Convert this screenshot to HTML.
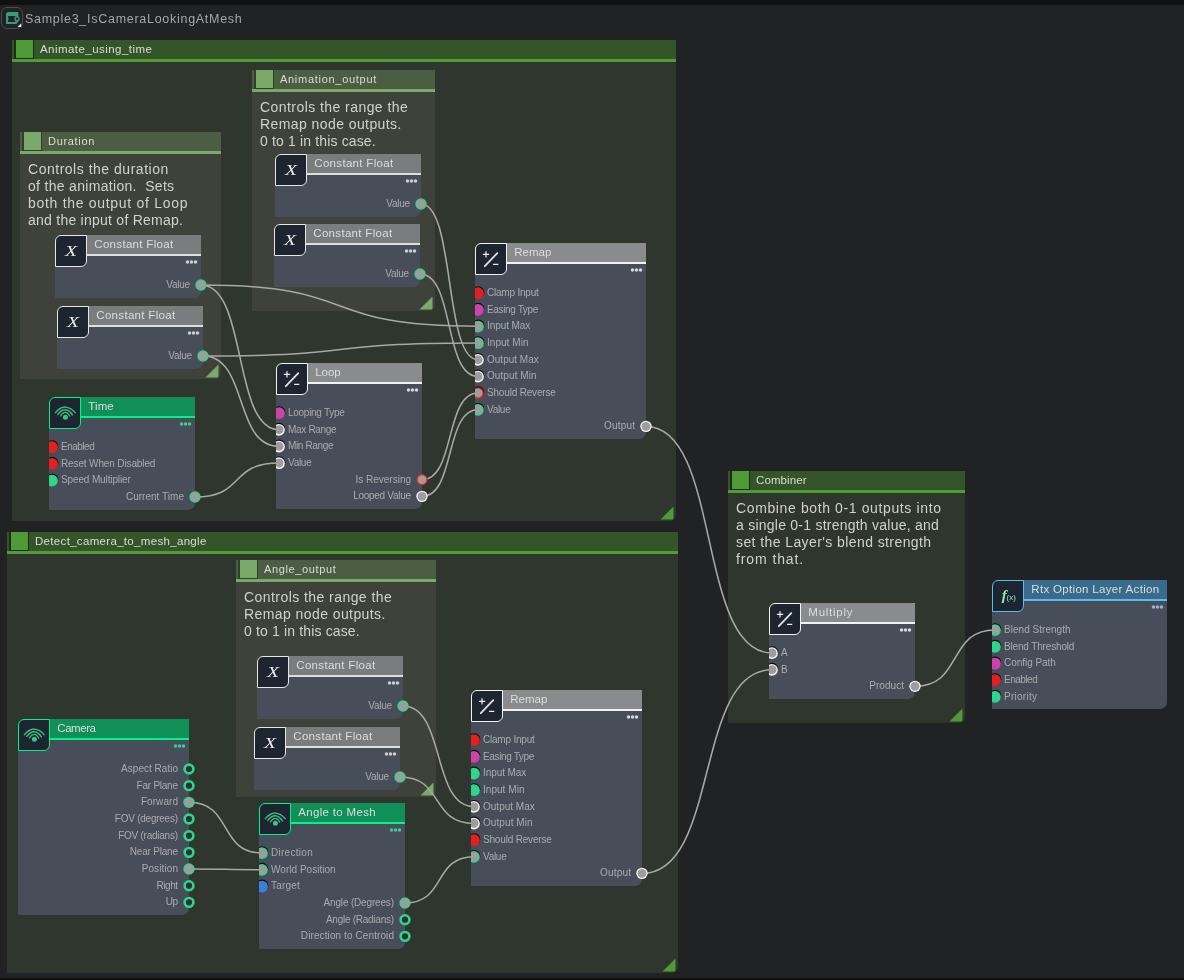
<!DOCTYPE html>
<html><head><meta charset="utf-8"><style>
*{margin:0;padding:0;box-sizing:border-box}
html,body{width:1184px;height:980px;overflow:hidden;background:#212224;font-family:"Liberation Sans", sans-serif;-webkit-font-smoothing:antialiased}
.root{position:absolute;left:0;top:0;width:1184px;height:980px;will-change:transform}
.band{position:absolute;left:0;width:1184px;background:#111112}
.fr{position:absolute;border-bottom-right-radius:6px}
.frh{position:absolute;left:0;top:0;right:0;height:22px}
.frs{position:absolute;left:2px;top:0;width:20px;height:19px}
.frt{position:absolute;left:28px;top:1.5px;font-size:11.5px;letter-spacing:0.35px;color:#dcdcd4;white-space:nowrap;line-height:14px}
.cm .frt{font-size:11px;top:2.3px}
.cmt{position:absolute;left:8px;top:29px;font-size:14px;line-height:16.85px;letter-spacing:0.48px;color:#d2d2ca;white-space:nowrap}
.tri{position:absolute;right:2px;bottom:1px}
.wires{position:absolute;left:0;top:0;overflow:visible}
.nd{position:absolute;border-bottom-right-radius:7px;overflow:hidden}
.nb{position:absolute;left:0;right:0;top:20px;bottom:0;background:#484d5a}
.nh{position:absolute;left:20px;top:0;right:0;height:21px}
.nt{position:absolute;left:39.3px;top:3px;font-size:11.5px;letter-spacing:0.3px;color:#dddddd;white-space:nowrap;line-height:12px}
.dots{position:absolute;right:2px;top:24px}
.ins{position:absolute;left:0;top:0}
.lb{position:absolute;font-size:10px;line-height:12px;letter-spacing:-0.15px;color:#aaabae;white-space:nowrap}
.li{left:12px}
.ic{position:absolute;left:0;top:0;width:32px;height:32px;background:#1d2530;border:1.2px solid;border-top-left-radius:6px;border-bottom-right-radius:6px}
.ix{position:absolute;left:0;top:1px;width:30px;height:30px;text-align:center;font-family:"Liberation Serif",serif;font-style:italic;font-size:14px;line-height:30px;color:#ececec;transform:scaleX(1.4)}
.ifx{position:absolute;left:7px;top:7px;color:#8fe8b4;font-family:"Liberation Serif",serif;white-space:nowrap}
.ifx i{font-size:17px;font-weight:bold}
.ifx span{font-size:9px}
.ttl{position:absolute;left:25px;top:12px;font-size:12.5px;letter-spacing:0.72px;color:#a6a6a6;white-space:nowrap;line-height:14px}
.ticon{position:absolute;left:1px;top:7px;width:22px;height:22px;border:1.3px solid #4c4c4e;border-radius:6px}
</style></head>
<body><div class="root">
<div class="band" style="top:0;height:5px"></div>
<div class="band" style="top:978px;height:2px"></div>
<div class="ticon"><svg width="22" height="22" viewBox="0 0 22 22" style="position:absolute;left:-1px;top:-1px"><path d="M5 7.5Q5 4.9 7.6 4.9L17.3 4.9L17.3 14.5L15.3 17L5 17Z" fill="#3a9c70"/><path d="M7 9L14.5 9Q13.5 12 14.5 15L7 15Q8 12 7 9Z" fill="#1c2631"/><circle cx="16" cy="11.8" r="2" fill="#1c2631" stroke="#3a9c70" stroke-width="1.3"/><path d="M20.3 16.2L20.3 20L16.5 20Z" fill="#e8e8e8"/></svg></div>
<div class="ttl">Sample3_IsCameraLookingAtMesh</div>

<div class="fr grp" style="left:12px;top:40px;width:664px;height:481px;background:#2e362d"><div class="frh" style="background:#335529;border-bottom:3px solid #4e9e34"></div><div class="frs" style="background:#4e9a36;border:1px solid #1f2a1b;border-left-width:2px;border-top:0"></div><div class="frt" style="letter-spacing:0.45px">Animate_using_time</div><svg class="tri" width="14" height="14" viewBox="0 0 14 14"><path d="M13.5 0.5 L13.5 12 Q13.5 13.5 12 13.5 L0.5 13.5 Z" fill="#4e9a36"/></svg></div><div class="fr grp" style="left:7px;top:532px;width:671px;height:441px;background:#2e362d"><div class="frh" style="background:#335529;border-bottom:3px solid #4e9e34"></div><div class="frs" style="background:#4e9a36;border:1px solid #1f2a1b;border-left-width:2px;border-top:0"></div><div class="frt" style="letter-spacing:0.32px">Detect_camera_to_mesh_angle</div><svg class="tri" width="14" height="14" viewBox="0 0 14 14"><path d="M13.5 0.5 L13.5 12 Q13.5 13.5 12 13.5 L0.5 13.5 Z" fill="#4e9a36"/></svg></div><div class="fr grp" style="left:728px;top:471px;width:237px;height:252px;background:#2e362d"><div class="frh" style="background:#335529;border-bottom:3px solid #4e9e34"></div><div class="frs" style="background:#4e9a36;border:1px solid #1f2a1b;border-left-width:2px;border-top:0"></div><div class="frt" style="letter-spacing:0.1px">Combiner</div><div class="cmt"><div style="letter-spacing:0.62px">Combine both 0-1 outputs into</div><div style="letter-spacing:0.24px">a single 0-1 strength value, and</div><div style="letter-spacing:0.41px">set the Layer's blend strength</div><div style="letter-spacing:0.9px">from that.</div></div><svg class="tri" width="14" height="14" viewBox="0 0 14 14"><path d="M13.5 0.5 L13.5 12 Q13.5 13.5 12 13.5 L0.5 13.5 Z" fill="#4e9a36"/></svg></div><div class="fr cm" style="left:20px;top:132px;width:201px;height:247px;background:#3e423a"><div class="frh" style="background:#4b5e43;border-bottom:3px solid #7aaa6a"></div><div class="frs" style="background:#7aaa6a;border:1px solid #333d2f;border-left-width:2px;border-top:0"></div><div class="frt" style="letter-spacing:0.69px">Duration</div><div class="cmt"><div style="letter-spacing:0.515px">Controls the duration</div><div style="letter-spacing:0.31px">of the animation.&nbsp; Sets</div><div style="letter-spacing:0.7px">both the output of Loop</div><div style="letter-spacing:0.25px">and the input of Remap.</div></div><svg class="tri" width="14" height="14" viewBox="0 0 14 14"><path d="M13.5 0.5 L13.5 12 Q13.5 13.5 12 13.5 L0.5 13.5 Z" fill="#7aaa6a"/></svg></div><div class="fr cm" style="left:252px;top:70px;width:183px;height:241px;background:#3e423a"><div class="frh" style="background:#4b5e43;border-bottom:3px solid #7aaa6a"></div><div class="frs" style="background:#7aaa6a;border:1px solid #333d2f;border-left-width:2px;border-top:0"></div><div class="frt" style="letter-spacing:0.71px">Animation_output</div><div class="cmt"><div style="letter-spacing:0.44px">Controls the range the</div><div style="letter-spacing:0.42px">Remap node outputs.</div><div style="letter-spacing:0.15px">0 to 1 in this case.</div></div><svg class="tri" width="14" height="14" viewBox="0 0 14 14"><path d="M13.5 0.5 L13.5 12 Q13.5 13.5 12 13.5 L0.5 13.5 Z" fill="#7aaa6a"/></svg></div><div class="fr cm" style="left:236px;top:560px;width:200px;height:237px;background:#3e423a"><div class="frh" style="background:#4b5e43;border-bottom:3px solid #7aaa6a"></div><div class="frs" style="background:#7aaa6a;border:1px solid #333d2f;border-left-width:2px;border-top:0"></div><div class="frt" style="letter-spacing:0.63px">Angle_output</div><div class="cmt"><div style="letter-spacing:0.44px">Controls the range the</div><div style="letter-spacing:0.42px">Remap node outputs.</div><div style="letter-spacing:0.15px">0 to 1 in this case.</div></div><svg class="tri" width="14" height="14" viewBox="0 0 14 14"><path d="M13.5 0.5 L13.5 12 Q13.5 13.5 12 13.5 L0.5 13.5 Z" fill="#7aaa6a"/></svg></div><svg class="wires" width="1184" height="980"><path d="M201.0 285.0C367.2 285.0 311.8 326.3 478.0 326.3 M201.0 285.0C247.8 285.0 232.2 429.7 279.0 429.7 M203.0 356.0C368.0 356.0 313.0 343.0 478.0 343.0 M203.0 356.0C248.6 356.0 233.4 446.3 279.0 446.3 M421.0 204.0C455.2 204.0 443.8 359.7 478.0 359.7 M420.0 274.0C454.8 274.0 443.2 376.4 478.0 376.4 M195.0 497.0C245.4 497.0 228.6 463.0 279.0 463.0 M422.0 479.7C455.6 479.7 444.4 393.0 478.0 393.0 M422.0 496.4C455.6 496.4 444.4 409.7 478.0 409.7 M646.0 426.4C721.6 426.4 696.4 653.0 772.0 653.0 M642.0 873.4C720.0 873.4 694.0 669.7 772.0 669.7 M915.0 686.3C963.0 686.3 947.0 630.0 995.0 630.0 M189.0 802.3C232.8 802.3 218.2 853.0 262.0 853.0 M189.0 869.0C232.8 869.0 218.2 869.7 262.0 869.7 M403.0 706.0C445.6 706.0 431.4 806.7 474.0 806.7 M400.0 777.0C444.4 777.0 429.6 823.4 474.0 823.4 M405.0 903.0C446.4 903.0 432.6 856.7 474.0 856.7" stroke="#a8a8a8" stroke-width="1.55" fill="none"/></svg><div class="nd" style="left:55px;top:235px;width:146px;height:62.5px"><div class="nb"></div><div class="nh" style="background:#7b7c7e;border-bottom:2px solid #dcdfde"></div><div class="nt" style="letter-spacing:0.31px">Constant Float</div><svg class="dots" width="14" height="6" viewBox="0 0 14 6"><circle cx="2.5" cy="3" r="1.75" fill="#d0d0d0"/><circle cx="6.5" cy="3" r="1.75" fill="#d0d0d0"/><circle cx="10.5" cy="3" r="1.75" fill="#d0d0d0"/></svg><div class="lb lo" style="top:44.0px;right:11.28px;letter-spacing:-0.28px">Value</div><div class="ic" style="border-color:#e6e6e6"><div class="ix">X</div></div></div><div class="nd" style="left:57px;top:306px;width:146px;height:62.5px"><div class="nb"></div><div class="nh" style="background:#7b7c7e;border-bottom:2px solid #dcdfde"></div><div class="nt" style="letter-spacing:0.31px">Constant Float</div><svg class="dots" width="14" height="6" viewBox="0 0 14 6"><circle cx="2.5" cy="3" r="1.75" fill="#d0d0d0"/><circle cx="6.5" cy="3" r="1.75" fill="#d0d0d0"/><circle cx="10.5" cy="3" r="1.75" fill="#d0d0d0"/></svg><div class="lb lo" style="top:44.0px;right:11.28px;letter-spacing:-0.28px">Value</div><div class="ic" style="border-color:#e6e6e6"><div class="ix">X</div></div></div><div class="nd" style="left:275px;top:154px;width:146px;height:62.5px"><div class="nb"></div><div class="nh" style="background:#7b7c7e;border-bottom:2px solid #dcdfde"></div><div class="nt" style="letter-spacing:0.31px">Constant Float</div><svg class="dots" width="14" height="6" viewBox="0 0 14 6"><circle cx="2.5" cy="3" r="1.75" fill="#d0d0d0"/><circle cx="6.5" cy="3" r="1.75" fill="#d0d0d0"/><circle cx="10.5" cy="3" r="1.75" fill="#d0d0d0"/></svg><div class="lb lo" style="top:44.0px;right:11.28px;letter-spacing:-0.28px">Value</div><div class="ic" style="border-color:#e6e6e6"><div class="ix">X</div></div></div><div class="nd" style="left:274px;top:224px;width:146px;height:62.5px"><div class="nb"></div><div class="nh" style="background:#7b7c7e;border-bottom:2px solid #dcdfde"></div><div class="nt" style="letter-spacing:0.31px">Constant Float</div><svg class="dots" width="14" height="6" viewBox="0 0 14 6"><circle cx="2.5" cy="3" r="1.75" fill="#d0d0d0"/><circle cx="6.5" cy="3" r="1.75" fill="#d0d0d0"/><circle cx="10.5" cy="3" r="1.75" fill="#d0d0d0"/></svg><div class="lb lo" style="top:44.0px;right:11.28px;letter-spacing:-0.28px">Value</div><div class="ic" style="border-color:#e6e6e6"><div class="ix">X</div></div></div><div class="nd" style="left:475px;top:243px;width:171px;height:195.9px"><div class="nb"></div><div class="nh" style="background:#8a8b8d;border-bottom:2px solid #f2f2f2"></div><div class="nt" style="letter-spacing:0.0px">Remap</div><svg class="dots" width="14" height="6" viewBox="0 0 14 6"><circle cx="2.5" cy="3" r="1.75" fill="#d8d8d8"/><circle cx="6.5" cy="3" r="1.75" fill="#d8d8d8"/><circle cx="10.5" cy="3" r="1.75" fill="#d8d8d8"/></svg><div class="lb li" style="top:44.0px;letter-spacing:-0.21px">Clamp Input</div><div class="lb li" style="top:60.7px;letter-spacing:-0.36px">Easing Type</div><div class="lb li" style="top:77.3px;letter-spacing:-0.08px">Input Max</div><div class="lb li" style="top:94.0px;letter-spacing:0.04px">Input Min</div><div class="lb li" style="top:110.7px;letter-spacing:0.01px">Output Max</div><div class="lb li" style="top:127.4px;letter-spacing:0.08px">Output Min</div><div class="lb li" style="top:144.0px;letter-spacing:-0.18px">Should Reverse</div><div class="lb li" style="top:160.7px;letter-spacing:-0.28px">Value</div><svg class="ins" width="171" height="195.9"><circle cx="3.3" cy="49.2" r="6" fill="#0c0c0c"/><circle cx="3" cy="50.2" r="5.9" fill="#e3201f"/><circle cx="3.3" cy="65.87" r="6" fill="#0c0c0c"/><circle cx="3" cy="66.87" r="5.9" fill="#cc44aa"/><circle cx="3.3" cy="82.54" r="6" fill="#0c0c0c"/><circle cx="3" cy="83.54" r="5.9" fill="#2ed68a"/><circle cx="3" cy="83.34" r="4.5" fill="#9d9d9d"/><circle cx="3.3" cy="99.21000000000001" r="6" fill="#0c0c0c"/><circle cx="3" cy="100.21000000000001" r="5.9" fill="#2ed68a"/><circle cx="3" cy="100.01" r="4.5" fill="#9d9d9d"/><circle cx="3.3" cy="115.88000000000001" r="6" fill="#0c0c0c"/><circle cx="3" cy="116.88000000000001" r="5.9" fill="#f2f2f2"/><circle cx="3" cy="116.68" r="4.5" fill="#9d9d9d"/><circle cx="3.3" cy="132.54999999999998" r="6" fill="#0c0c0c"/><circle cx="3" cy="133.54999999999998" r="5.9" fill="#f2f2f2"/><circle cx="3" cy="133.35" r="4.5" fill="#9d9d9d"/><circle cx="3.3" cy="149.22" r="6" fill="#0c0c0c"/><circle cx="3" cy="150.22" r="5.9" fill="#e3201f"/><circle cx="3" cy="150.02" r="4.5" fill="#9d9d9d"/><circle cx="3.3" cy="165.89" r="6" fill="#0c0c0c"/><circle cx="3" cy="166.89" r="5.9" fill="#2ed68a"/><circle cx="3" cy="166.69" r="4.5" fill="#9d9d9d"/></svg><div class="lb lo" style="top:177.4px;right:10.78px;letter-spacing:0.22px">Output</div><div class="ic" style="border-color:#f2f2f2"><svg width="32" height="32" viewBox="0 0 32 32" style="position:absolute;left:-1.2px;top:-1.2px"><path d="M7.9 11.4h6.3M11 8.3v6.2M18.1 21.3h5.2" stroke="#ececec" stroke-width="1.25"/><path d="M9.8 23.2L22.3 10.2" stroke="#e0e0e0" stroke-width="1.85" stroke-linecap="round"/></svg></div></div><div class="nd" style="left:276px;top:363px;width:146px;height:145.9px"><div class="nb"></div><div class="nh" style="background:#8a8b8d;border-bottom:2px solid #f2f2f2"></div><div class="nt" style="letter-spacing:-0.1px">Loop</div><svg class="dots" width="14" height="6" viewBox="0 0 14 6"><circle cx="2.5" cy="3" r="1.75" fill="#d8d8d8"/><circle cx="6.5" cy="3" r="1.75" fill="#d8d8d8"/><circle cx="10.5" cy="3" r="1.75" fill="#d8d8d8"/></svg><div class="lb li" style="top:44.0px;letter-spacing:-0.28px">Looping Type</div><div class="lb li" style="top:60.7px;letter-spacing:-0.31px">Max Range</div><div class="lb li" style="top:77.3px;letter-spacing:-0.36px">Min Range</div><div class="lb li" style="top:94.0px;letter-spacing:-0.28px">Value</div><svg class="ins" width="146" height="145.9"><circle cx="3.3" cy="49.2" r="6" fill="#0c0c0c"/><circle cx="3" cy="50.2" r="5.9" fill="#cc44aa"/><circle cx="3.3" cy="65.87" r="6" fill="#0c0c0c"/><circle cx="3" cy="66.87" r="5.9" fill="#f2f2f2"/><circle cx="3" cy="66.67" r="4.5" fill="#9d9d9d"/><circle cx="3.3" cy="82.54" r="6" fill="#0c0c0c"/><circle cx="3" cy="83.54" r="5.9" fill="#f2f2f2"/><circle cx="3" cy="83.34" r="4.5" fill="#9d9d9d"/><circle cx="3.3" cy="99.21000000000001" r="6" fill="#0c0c0c"/><circle cx="3" cy="100.21000000000001" r="5.9" fill="#f2f2f2"/><circle cx="3" cy="100.01" r="4.5" fill="#9d9d9d"/></svg><div class="lb lo" style="top:110.7px;right:11.01px;letter-spacing:-0.01px">Is Reversing</div><div class="lb lo" style="top:127.4px;right:11.30px;letter-spacing:-0.3px">Looped Value</div><div class="ic" style="border-color:#f2f2f2"><svg width="32" height="32" viewBox="0 0 32 32" style="position:absolute;left:-1.2px;top:-1.2px"><path d="M7.9 11.4h6.3M11 8.3v6.2M18.1 21.3h5.2" stroke="#ececec" stroke-width="1.25"/><path d="M9.8 23.2L22.3 10.2" stroke="#e0e0e0" stroke-width="1.85" stroke-linecap="round"/></svg></div></div><div class="nd" style="left:49px;top:397px;width:146px;height:112.5px"><div class="nb"></div><div class="nh" style="background:#108f58;border-bottom:2px solid #00f28a"></div><div class="nt" style="letter-spacing:0.1px">Time</div><svg class="dots" width="14" height="6" viewBox="0 0 14 6"><circle cx="2.5" cy="3" r="1.75" fill="#3fd08a"/><circle cx="6.5" cy="3" r="1.75" fill="#3fd08a"/><circle cx="10.5" cy="3" r="1.75" fill="#3fd08a"/></svg><div class="lb li" style="top:44.0px;letter-spacing:-0.5px">Enabled</div><div class="lb li" style="top:60.7px;letter-spacing:-0.13px">Reset When Disabled</div><div class="lb li" style="top:77.3px;letter-spacing:-0.13px">Speed Multiplier</div><svg class="ins" width="146" height="112.5"><circle cx="3.3" cy="49.2" r="6" fill="#0c0c0c"/><circle cx="3" cy="50.2" r="5.9" fill="#e3201f"/><circle cx="3.3" cy="65.87" r="6" fill="#0c0c0c"/><circle cx="3" cy="66.87" r="5.9" fill="#e3201f"/><circle cx="3.3" cy="82.54" r="6" fill="#0c0c0c"/><circle cx="3" cy="83.54" r="5.9" fill="#2ed68a"/></svg><div class="lb lo" style="top:94.0px;right:10.97px;letter-spacing:0.03px">Current Time</div><div class="ic" style="border-color:#00f28a"><svg width="32" height="32" viewBox="0 0 32 32" style="position:absolute;left:-1.2px;top:-1.2px"><path d="M6 16.1 Q16.3 3.9 26.6 16.2 M8.5 17.9 Q16.2 7.4 23.8 18.3 M11.2 19.4 Q16.2 11.4 21 19.5" stroke="#3cc282" stroke-width="1.3" fill="none"/><circle cx="16.4" cy="20.3" r="2.5" fill="#3cc282"/></svg></div></div><div class="nd" style="left:18px;top:719px;width:171px;height:195.9px"><div class="nb"></div><div class="nh" style="background:#108f58;border-bottom:2px solid #00f28a"></div><div class="nt" style="letter-spacing:-0.45px">Camera</div><svg class="dots" width="14" height="6" viewBox="0 0 14 6"><circle cx="2.5" cy="3" r="1.75" fill="#3fd08a"/><circle cx="6.5" cy="3" r="1.75" fill="#3fd08a"/><circle cx="10.5" cy="3" r="1.75" fill="#3fd08a"/></svg><div class="lb lo" style="top:44.0px;right:10.98px;letter-spacing:0.02px">Aspect Ratio</div><div class="lb lo" style="top:60.7px;right:11.24px;letter-spacing:-0.24px">Far Plane</div><div class="lb lo" style="top:77.3px;right:10.93px;letter-spacing:0.07px">Forward</div><div class="lb lo" style="top:94.0px;right:11.25px;letter-spacing:-0.25px">FOV (degrees)</div><div class="lb lo" style="top:110.7px;right:11.25px;letter-spacing:-0.25px">FOV (radians)</div><div class="lb lo" style="top:127.4px;right:11.20px;letter-spacing:-0.2px">Near Plane</div><div class="lb lo" style="top:144.0px;right:10.89px;letter-spacing:0.11px">Position</div><div class="lb lo" style="top:160.7px;right:11.47px;letter-spacing:-0.47px">Right</div><div class="lb lo" style="top:177.4px;right:11.50px;letter-spacing:-0.5px">Up</div><div class="ic" style="border-color:#00f28a"><svg width="32" height="32" viewBox="0 0 32 32" style="position:absolute;left:-1.2px;top:-1.2px"><path d="M6 16.1 Q16.3 3.9 26.6 16.2 M8.5 17.9 Q16.2 7.4 23.8 18.3 M11.2 19.4 Q16.2 11.4 21 19.5" stroke="#3cc282" stroke-width="1.3" fill="none"/><circle cx="16.4" cy="20.3" r="2.5" fill="#3cc282"/></svg></div></div><div class="nd" style="left:257px;top:656px;width:146px;height:62.5px"><div class="nb"></div><div class="nh" style="background:#7b7c7e;border-bottom:2px solid #dcdfde"></div><div class="nt" style="letter-spacing:0.31px">Constant Float</div><svg class="dots" width="14" height="6" viewBox="0 0 14 6"><circle cx="2.5" cy="3" r="1.75" fill="#d0d0d0"/><circle cx="6.5" cy="3" r="1.75" fill="#d0d0d0"/><circle cx="10.5" cy="3" r="1.75" fill="#d0d0d0"/></svg><div class="lb lo" style="top:44.0px;right:11.28px;letter-spacing:-0.28px">Value</div><div class="ic" style="border-color:#e6e6e6"><div class="ix">X</div></div></div><div class="nd" style="left:254px;top:727px;width:146px;height:62.5px"><div class="nb"></div><div class="nh" style="background:#7b7c7e;border-bottom:2px solid #dcdfde"></div><div class="nt" style="letter-spacing:0.31px">Constant Float</div><svg class="dots" width="14" height="6" viewBox="0 0 14 6"><circle cx="2.5" cy="3" r="1.75" fill="#d0d0d0"/><circle cx="6.5" cy="3" r="1.75" fill="#d0d0d0"/><circle cx="10.5" cy="3" r="1.75" fill="#d0d0d0"/></svg><div class="lb lo" style="top:44.0px;right:11.28px;letter-spacing:-0.28px">Value</div><div class="ic" style="border-color:#e6e6e6"><div class="ix">X</div></div></div><div class="nd" style="left:259px;top:803px;width:146px;height:145.9px"><div class="nb"></div><div class="nh" style="background:#108f58;border-bottom:2px solid #00f28a"></div><div class="nt" style="letter-spacing:0.32px">Angle to Mesh</div><svg class="dots" width="14" height="6" viewBox="0 0 14 6"><circle cx="2.5" cy="3" r="1.75" fill="#3fd08a"/><circle cx="6.5" cy="3" r="1.75" fill="#3fd08a"/><circle cx="10.5" cy="3" r="1.75" fill="#3fd08a"/></svg><div class="lb li" style="top:44.0px;letter-spacing:0.28px">Direction</div><div class="lb li" style="top:60.7px;letter-spacing:0.03px">World Position</div><div class="lb li" style="top:77.3px;letter-spacing:0.18px">Target</div><svg class="ins" width="146" height="145.9"><circle cx="3.3" cy="49.2" r="6" fill="#0c0c0c"/><circle cx="3" cy="50.2" r="5.9" fill="#2ed68a"/><circle cx="3" cy="50.0" r="4.5" fill="#9d9d9d"/><circle cx="3.3" cy="65.87" r="6" fill="#0c0c0c"/><circle cx="3" cy="66.87" r="5.9" fill="#2ed68a"/><circle cx="3" cy="66.67" r="4.5" fill="#9d9d9d"/><circle cx="3.3" cy="82.54" r="6" fill="#0c0c0c"/><circle cx="3" cy="83.54" r="5.9" fill="#3a7fd8"/></svg><div class="lb lo" style="top:94.0px;right:11.17px;letter-spacing:-0.17px">Angle (Degrees)</div><div class="lb lo" style="top:110.7px;right:11.26px;letter-spacing:-0.26px">Angle (Radians)</div><div class="lb lo" style="top:127.4px;right:10.90px;letter-spacing:0.1px">Direction to Centroid</div><div class="ic" style="border-color:#00f28a"><svg width="32" height="32" viewBox="0 0 32 32" style="position:absolute;left:-1.2px;top:-1.2px"><path d="M6 16.1 Q16.3 3.9 26.6 16.2 M8.5 17.9 Q16.2 7.4 23.8 18.3 M11.2 19.4 Q16.2 11.4 21 19.5" stroke="#3cc282" stroke-width="1.3" fill="none"/><circle cx="16.4" cy="20.3" r="2.5" fill="#3cc282"/></svg></div></div><div class="nd" style="left:471px;top:690px;width:171px;height:195.9px"><div class="nb"></div><div class="nh" style="background:#8a8b8d;border-bottom:2px solid #f2f2f2"></div><div class="nt" style="letter-spacing:0.0px">Remap</div><svg class="dots" width="14" height="6" viewBox="0 0 14 6"><circle cx="2.5" cy="3" r="1.75" fill="#d8d8d8"/><circle cx="6.5" cy="3" r="1.75" fill="#d8d8d8"/><circle cx="10.5" cy="3" r="1.75" fill="#d8d8d8"/></svg><div class="lb li" style="top:44.0px;letter-spacing:-0.21px">Clamp Input</div><div class="lb li" style="top:60.7px;letter-spacing:-0.36px">Easing Type</div><div class="lb li" style="top:77.3px;letter-spacing:-0.08px">Input Max</div><div class="lb li" style="top:94.0px;letter-spacing:0.04px">Input Min</div><div class="lb li" style="top:110.7px;letter-spacing:0.01px">Output Max</div><div class="lb li" style="top:127.4px;letter-spacing:0.08px">Output Min</div><div class="lb li" style="top:144.0px;letter-spacing:-0.18px">Should Reverse</div><div class="lb li" style="top:160.7px;letter-spacing:-0.28px">Value</div><svg class="ins" width="171" height="195.9"><circle cx="3.3" cy="49.2" r="6" fill="#0c0c0c"/><circle cx="3" cy="50.2" r="5.9" fill="#e3201f"/><circle cx="3.3" cy="65.87" r="6" fill="#0c0c0c"/><circle cx="3" cy="66.87" r="5.9" fill="#cc44aa"/><circle cx="3.3" cy="82.54" r="6" fill="#0c0c0c"/><circle cx="3" cy="83.54" r="5.9" fill="#2ed68a"/><circle cx="3.3" cy="99.21000000000001" r="6" fill="#0c0c0c"/><circle cx="3" cy="100.21000000000001" r="5.9" fill="#2ed68a"/><circle cx="3.3" cy="115.88000000000001" r="6" fill="#0c0c0c"/><circle cx="3" cy="116.88000000000001" r="5.9" fill="#f2f2f2"/><circle cx="3" cy="116.68" r="4.5" fill="#9d9d9d"/><circle cx="3.3" cy="132.54999999999998" r="6" fill="#0c0c0c"/><circle cx="3" cy="133.54999999999998" r="5.9" fill="#f2f2f2"/><circle cx="3" cy="133.35" r="4.5" fill="#9d9d9d"/><circle cx="3.3" cy="149.22" r="6" fill="#0c0c0c"/><circle cx="3" cy="150.22" r="5.9" fill="#e3201f"/><circle cx="3.3" cy="165.89" r="6" fill="#0c0c0c"/><circle cx="3" cy="166.89" r="5.9" fill="#2ed68a"/><circle cx="3" cy="166.69" r="4.5" fill="#9d9d9d"/></svg><div class="lb lo" style="top:177.4px;right:10.78px;letter-spacing:0.22px">Output</div><div class="ic" style="border-color:#f2f2f2"><svg width="32" height="32" viewBox="0 0 32 32" style="position:absolute;left:-1.2px;top:-1.2px"><path d="M7.9 11.4h6.3M11 8.3v6.2M18.1 21.3h5.2" stroke="#ececec" stroke-width="1.25"/><path d="M9.8 23.2L22.3 10.2" stroke="#e0e0e0" stroke-width="1.85" stroke-linecap="round"/></svg></div></div><div class="nd" style="left:769px;top:603px;width:146px;height:95.8px"><div class="nb"></div><div class="nh" style="background:#8a8b8d;border-bottom:2px solid #f2f2f2"></div><div class="nt" style="letter-spacing:0.75px">Multiply</div><svg class="dots" width="14" height="6" viewBox="0 0 14 6"><circle cx="2.5" cy="3" r="1.75" fill="#d8d8d8"/><circle cx="6.5" cy="3" r="1.75" fill="#d8d8d8"/><circle cx="10.5" cy="3" r="1.75" fill="#d8d8d8"/></svg><div class="lb li" style="top:44.0px;letter-spacing:-0.5px">A</div><div class="lb li" style="top:60.7px;letter-spacing:-0.5px">B</div><svg class="ins" width="146" height="95.8"><circle cx="3.3" cy="49.2" r="6" fill="#0c0c0c"/><circle cx="3" cy="50.2" r="5.9" fill="#f2f2f2"/><circle cx="3" cy="50.0" r="4.5" fill="#9d9d9d"/><circle cx="3.3" cy="65.87" r="6" fill="#0c0c0c"/><circle cx="3" cy="66.87" r="5.9" fill="#f2f2f2"/><circle cx="3" cy="66.67" r="4.5" fill="#9d9d9d"/></svg><div class="lb lo" style="top:77.3px;right:10.95px;letter-spacing:0.05px">Product</div><div class="ic" style="border-color:#f2f2f2"><svg width="32" height="32" viewBox="0 0 32 32" style="position:absolute;left:-1.2px;top:-1.2px"><path d="M7.9 11.4h6.3M11 8.3v6.2M18.1 21.3h5.2" stroke="#ececec" stroke-width="1.25"/><path d="M9.8 23.2L22.3 10.2" stroke="#e0e0e0" stroke-width="1.85" stroke-linecap="round"/></svg></div></div><div class="nd" style="left:992px;top:580px;width:175px;height:129.2px"><div class="nb"></div><div class="nh" style="background:#386b8c;border-bottom:2px solid #5cbcee"></div><div class="nt" style="letter-spacing:0.32px">Rtx Option Layer Action</div><svg class="dots" width="14" height="6" viewBox="0 0 14 6"><circle cx="2.5" cy="3" r="1.75" fill="#8fb8d0"/><circle cx="6.5" cy="3" r="1.75" fill="#8fb8d0"/><circle cx="10.5" cy="3" r="1.75" fill="#8fb8d0"/></svg><div class="lb li" style="top:44.0px;letter-spacing:0.03px">Blend Strength</div><div class="lb li" style="top:60.7px;letter-spacing:-0.16px">Blend Threshold</div><div class="lb li" style="top:77.3px;letter-spacing:-0.04px">Config Path</div><div class="lb li" style="top:94.0px;letter-spacing:-0.5px">Enabled</div><div class="lb li" style="top:110.7px;letter-spacing:0.26px">Priority</div><svg class="ins" width="175" height="129.2"><circle cx="3.3" cy="49.2" r="6" fill="#0c0c0c"/><circle cx="3" cy="50.2" r="5.9" fill="#2ed68a"/><circle cx="3" cy="50.0" r="4.5" fill="#9d9d9d"/><circle cx="3.3" cy="65.87" r="6" fill="#0c0c0c"/><circle cx="3" cy="66.87" r="5.9" fill="#2ed68a"/><circle cx="3.3" cy="82.54" r="6" fill="#0c0c0c"/><circle cx="3" cy="83.54" r="5.9" fill="#cc44aa"/><circle cx="3.3" cy="99.21000000000001" r="6" fill="#0c0c0c"/><circle cx="3" cy="100.21000000000001" r="5.9" fill="#e3201f"/><circle cx="3.3" cy="115.88000000000001" r="6" fill="#0c0c0c"/><circle cx="3" cy="116.88000000000001" r="5.9" fill="#2ed68a"/></svg><div class="ic" style="border-color:#5cbcee"><svg width="32" height="32" viewBox="0 0 32 32" style="position:absolute;left:-1.2px;top:-1.2px"><text x="9.8" y="19.8" font-family="Liberation Serif" font-style="italic" font-weight="bold" font-size="15" fill="#8ee8b2">f</text><text x="14.6" y="19.6" font-family="Liberation Sans" font-size="8" fill="#8ee8b2">(x)</text></svg></div></div><svg class="wires" width="1184" height="980"><circle cx="201" cy="285.0" r="5.7" fill="#2ed68a"/><circle cx="201" cy="285.0" r="4.4" fill="#9d9d9d"/><circle cx="203" cy="356.0" r="5.7" fill="#2ed68a"/><circle cx="203" cy="356.0" r="4.4" fill="#9d9d9d"/><circle cx="421" cy="204.0" r="5.7" fill="#2ed68a"/><circle cx="421" cy="204.0" r="4.4" fill="#9d9d9d"/><circle cx="420" cy="274.0" r="5.7" fill="#2ed68a"/><circle cx="420" cy="274.0" r="4.4" fill="#9d9d9d"/><circle cx="646" cy="426.36" r="5.7" fill="#f2f2f2"/><circle cx="646" cy="426.36" r="4.4" fill="#9d9d9d"/><circle cx="422" cy="479.68" r="5.7" fill="#e3201f"/><circle cx="422" cy="479.68" r="4.4" fill="#9d9d9d"/><circle cx="422" cy="496.35" r="5.7" fill="#f2f2f2"/><circle cx="422" cy="496.35" r="4.4" fill="#9d9d9d"/><circle cx="195" cy="497.01" r="5.7" fill="#2ed68a"/><circle cx="195" cy="497.01" r="4.4" fill="#9d9d9d"/><circle cx="189" cy="769.0" r="4.4" fill="#2b303a" stroke="#2ed68a" stroke-width="2.6"/><circle cx="189" cy="785.67" r="4.4" fill="#2b303a" stroke="#2ed68a" stroke-width="2.6"/><circle cx="189" cy="802.34" r="5.7" fill="#2ed68a"/><circle cx="189" cy="802.34" r="4.4" fill="#9d9d9d"/><circle cx="189" cy="819.01" r="4.4" fill="#2b303a" stroke="#2ed68a" stroke-width="2.6"/><circle cx="189" cy="835.68" r="4.4" fill="#2b303a" stroke="#2ed68a" stroke-width="2.6"/><circle cx="189" cy="852.35" r="4.4" fill="#2b303a" stroke="#2ed68a" stroke-width="2.6"/><circle cx="189" cy="869.02" r="5.7" fill="#2ed68a"/><circle cx="189" cy="869.02" r="4.4" fill="#9d9d9d"/><circle cx="189" cy="885.69" r="4.4" fill="#2b303a" stroke="#2ed68a" stroke-width="2.6"/><circle cx="189" cy="902.36" r="4.4" fill="#2b303a" stroke="#2ed68a" stroke-width="2.6"/><circle cx="403" cy="706.0" r="5.7" fill="#2ed68a"/><circle cx="403" cy="706.0" r="4.4" fill="#9d9d9d"/><circle cx="400" cy="777.0" r="5.7" fill="#2ed68a"/><circle cx="400" cy="777.0" r="4.4" fill="#9d9d9d"/><circle cx="405" cy="903.01" r="5.7" fill="#2ed68a"/><circle cx="405" cy="903.01" r="4.4" fill="#9d9d9d"/><circle cx="405" cy="919.68" r="4.4" fill="#2b303a" stroke="#2ed68a" stroke-width="2.6"/><circle cx="405" cy="936.35" r="4.4" fill="#2b303a" stroke="#2ed68a" stroke-width="2.6"/><circle cx="642" cy="873.36" r="5.7" fill="#f2f2f2"/><circle cx="642" cy="873.36" r="4.4" fill="#9d9d9d"/><circle cx="915" cy="686.34" r="5.7" fill="#f2f2f2"/><circle cx="915" cy="686.34" r="4.4" fill="#9d9d9d"/></svg>
</div></body></html>
